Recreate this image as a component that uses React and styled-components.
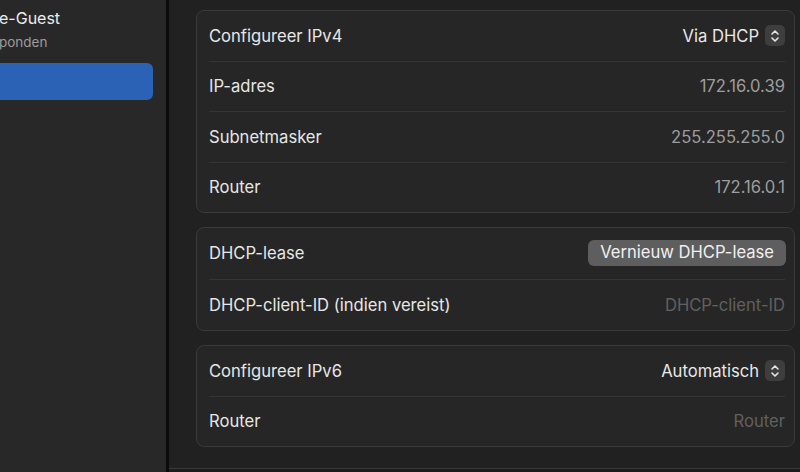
import React from "react";
import styled, { createGlobalStyle } from "styled-components";

const Global = createGlobalStyle`
  html, body {
    margin: 0;
    padding: 0;
    background: #202020;
    font-family: Inter, "Noto Sans", "Liberation Sans", sans-serif;
    -webkit-font-smoothing: antialiased;
  }
`;

const Page = styled.div`
  display: flex;
  width: 800px;
  height: 472px;
  overflow: hidden;
`;

const Sidebar = styled.div`
  width: 166px;
  flex-shrink: 0;
  background: #292828;
  border-right: 3px solid #0b0b0b;
  display: flex;
  flex-direction: column;
`;

const NetName = styled.div`
  color: #ececec;
  font-size: 16px;
  margin-top: 8px;
  line-height: 20px;
  margin-left: -1px;
`;

const NetStatus = styled.div`
  color: #9c9c9c;
  font-size: 13.5px;
  line-height: 18px;
  margin-top: 5px;
  margin-left: -1px;
`;

const Selected = styled.div`
  margin-top: 12px;
  width: 153px;
  height: 37px;
  background: #2c62b6;
  border-radius: 0 6px 6px 0;
`;

const Main = styled.div`
  flex: 1;
  display: flex;
  flex-direction: column;
  background: #212121;
`;

const Scroll = styled.div`
  flex: 1;
  padding: 10px 5px 0 27px;
  display: flex;
  flex-direction: column;
  gap: 14px;
`;

const Footer = styled.div`
  height: 3px;
  border-top: 1px solid #3a3a3a;
  background: #1d1d1d;
`;

const Card = styled.div`
  --row-h: ${(p) => p.$rowH || 49.5}px;
  background: #262626;
  border: 1px solid #3a3a3a;
  border-radius: 8px;
  padding: 0 9px 0 12px;
`;

const Row = styled.div`
  height: var(--row-h);
  display: flex;
  align-items: center;
  justify-content: space-between;
  font-size: 16.6px;
  & + & {
    border-top: 1px solid #353535;
  }
`;

const Label = styled.span`
  color: #e6e6e6;
`;

const Value = styled.span`
  color: ${(p) => (p.$placeholder ? "#606060" : "#9d9d9d")};
`;

const Select = styled.div`
  display: flex;
  align-items: center;
  gap: 6px;
  color: #e8e8e8;
`;

const Stepper = styled.div`
  width: 20px;
  height: 21px;
  border-radius: 5px;
  background: #3e3e3e;
  display: flex;
  align-items: center;
  justify-content: center;
`;

const Button = styled.div`
  background: #5e5e5e;
  color: #f0f0f0;
  border-radius: 6px;
  padding: 3px 12px 4px;
  margin-right: -1px;
  font-size: 16.6px;
  line-height: 19px;
`;

const Chevrons = () => (
  <svg width="10" height="14" viewBox="0 0 10 14" fill="none" stroke="#e6e6e6" strokeWidth="1.6" strokeLinecap="round" strokeLinejoin="round">
    <path d="M2 5 L5 2 L8 5" />
    <path d="M2 9 L5 12 L8 9" />
  </svg>
);

const PopUp = ({ children }) => (
  <Select>
    {children}
    <Stepper>
      <Chevrons />
    </Stepper>
  </Select>
);

export default function App() {
  return (
    <Page>
      <Global />
      <Sidebar>
        <NetName>e-Guest</NetName>
        <NetStatus>ponden</NetStatus>
        <Selected />
      </Sidebar>
      <Main>
        <Scroll>
          <Card>
            <Row>
              <Label>Configureer IPv4</Label>
              <PopUp>Via DHCP</PopUp>
            </Row>
            <Row>
              <Label>IP-adres</Label>
              <Value>172.16.0.39</Value>
            </Row>
            <Row>
              <Label>Subnetmasker</Label>
              <Value>255.255.255.0</Value>
            </Row>
            <Row>
              <Label>Router</Label>
              <Value>172.16.0.1</Value>
            </Row>
          </Card>
          <Card $rowH={50.5}>
            <Row>
              <Label>DHCP-lease</Label>
              <Button>Vernieuw DHCP-lease</Button>
            </Row>
            <Row>
              <Label>DHCP-client-ID (indien vereist)</Label>
              <Value $placeholder>DHCP-client-ID</Value>
            </Row>
          </Card>
          <Card $rowH={49.5}>
            <Row>
              <Label>Configureer IPv6</Label>
              <PopUp>Automatisch</PopUp>
            </Row>
            <Row>
              <Label>Router</Label>
              <Value $placeholder>Router</Value>
            </Row>
          </Card>
        </Scroll>
        <Footer />
      </Main>
    </Page>
  );
}
